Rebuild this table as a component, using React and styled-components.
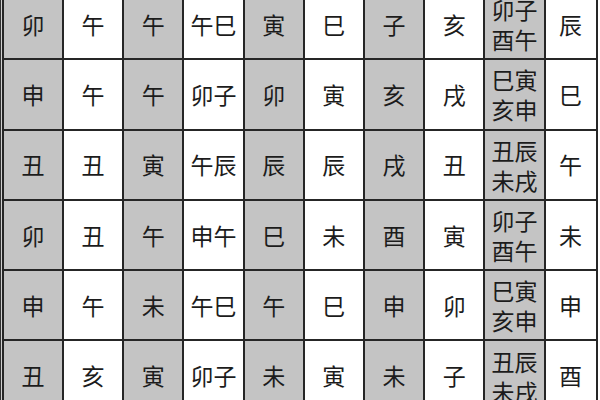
import React from 'react';
import styled, { createGlobalStyle } from 'styled-components';

const GlobalStyle = createGlobalStyle`
    html, body {
        margin: 0;
        padding: 0;
        background: #fff;
        overflow: hidden;
    }
    body {
        font-family: "Noto Sans CJK SC", "Noto Sans CJK TC", sans-serif;
    }
`;

const Frame = styled.div`
    width: fit-content;
    margin-top: -12px;
    margin-left: 0;
    border-left: 1px solid #333;
    padding-left: 1px;
    background: #d0d0d0;
`;

const Table = styled.div`
    display: grid;
    grid-template-columns: 58px repeat(8, 58.2px) 50px;
    grid-auto-rows: 68.3px;
    gap: 2px;
    padding: 2px;
    background: #262626;
`;

const Cell = styled.div`
    display: flex;
    align-items: center;
    justify-content: center;
    text-align: center;
    background: ${props => (props.$shaded ? '#c4c4c4' : '#ffffff')};
    color: #1c1c1c;
    font-size: 23px;
    line-height: ${props => (props.$stacked ? '30px' : '1')};
    white-space: pre-line;
`;

const rows = [
    ['卯', '午', '午', '午巳', '寅', '巳', '子', '亥', '卯子\n酉午', '辰'],
    ['申', '午', '午', '卯子', '卯', '寅', '亥', '戌', '巳寅\n亥申', '巳'],
    ['丑', '丑', '寅', '午辰', '辰', '辰', '戌', '丑', '丑辰\n未戌', '午'],
    ['卯', '丑', '午', '申午', '巳', '未', '酉', '寅', '卯子\n酉午', '未'],
    ['申', '午', '未', '午巳', '午', '巳', '申', '卯', '巳寅\n亥申', '申'],
    ['丑', '亥', '寅', '卯子', '未', '寅', '未', '子', '丑辰\n未戌', '酉'],
];

const App = () => (
    <React.Fragment>
        <GlobalStyle />
        <Frame>
            <Table>
                {rows.map((row, r) =>
                    row.map((text, c) => (
                        <Cell
                            key={`${r}-${c}`}
                            $shaded={c % 2 === 0}
                            $stacked={text.includes('\n')}
                        >
                            {text}
                        </Cell>
                    ))
                )}
            </Table>
        </Frame>
    </React.Fragment>
);

export default App;
